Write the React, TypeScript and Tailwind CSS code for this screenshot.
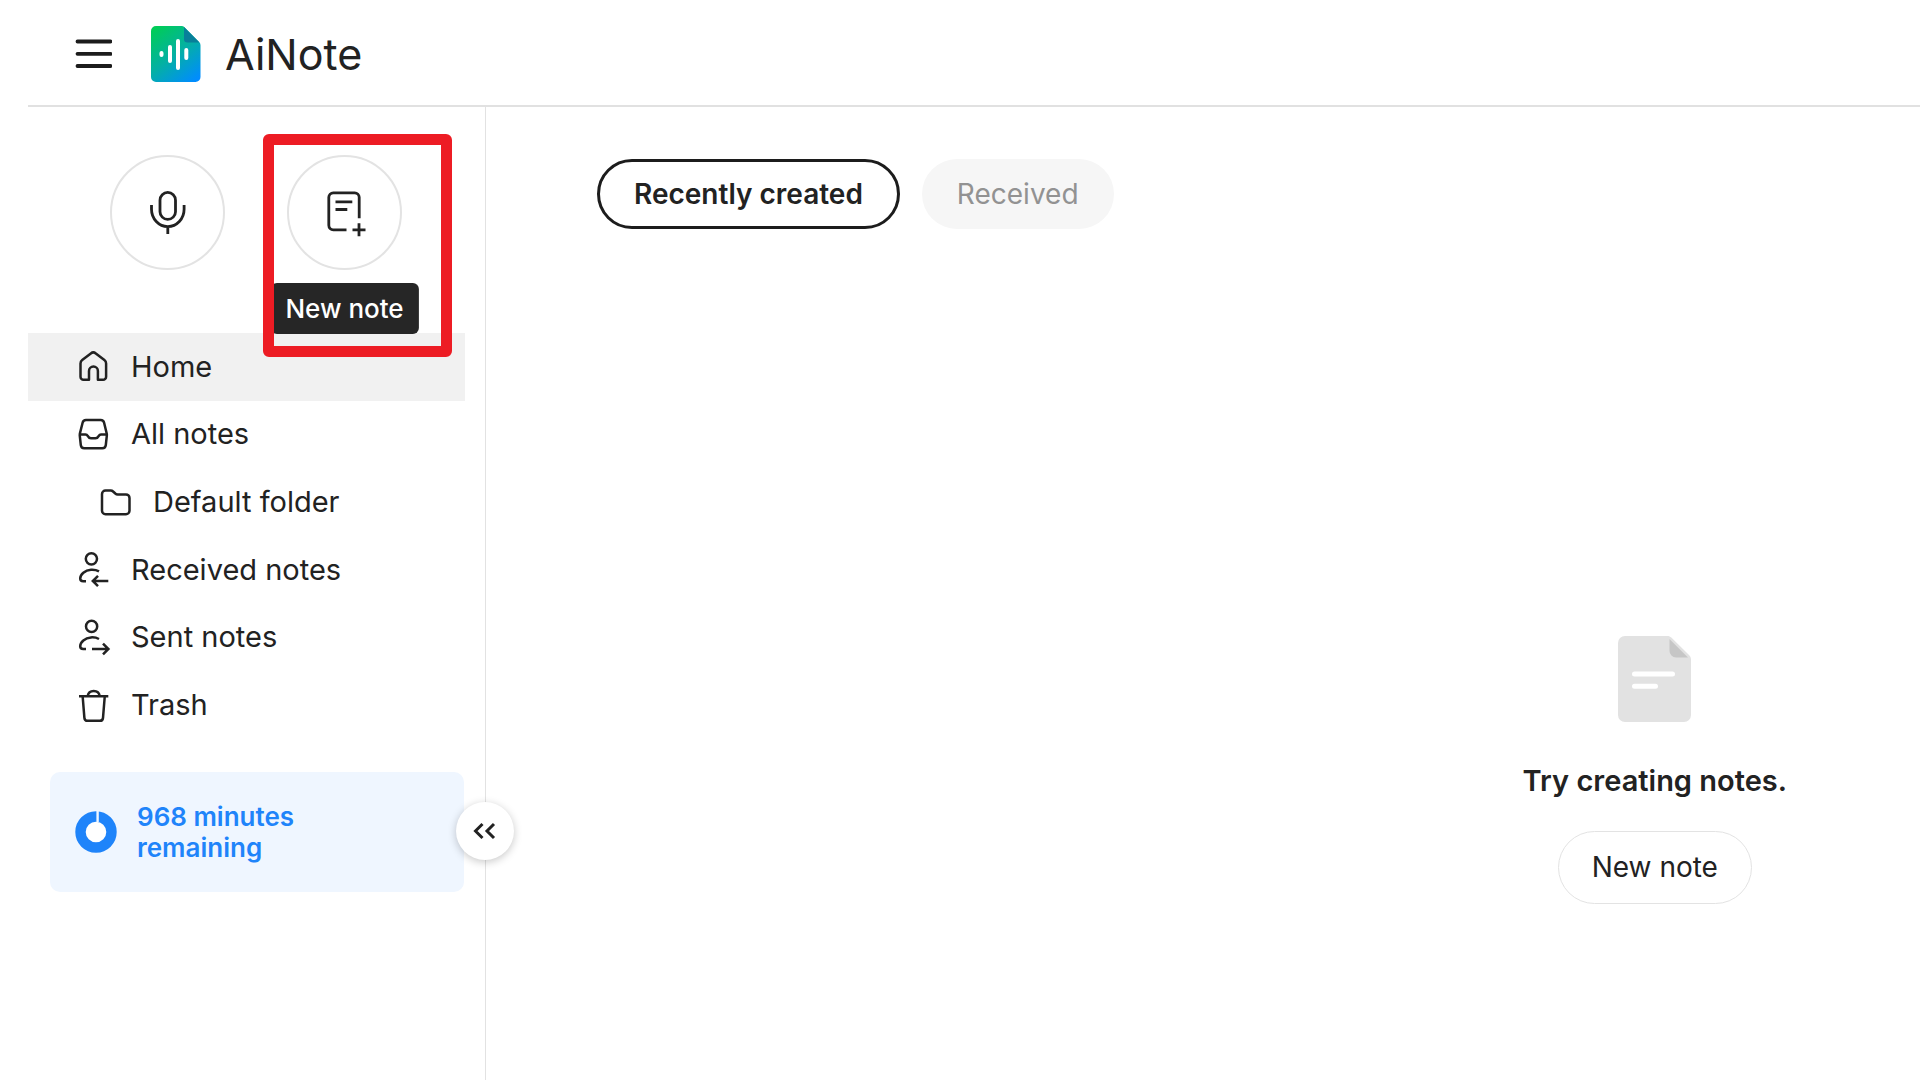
import React, { useState } from "react";

type IconProps = { children: React.ReactNode };

// Shared 32px outline icon used in the sidebar menu
const MenuIcon: React.FC<IconProps> = ({ children }) => (
  <svg
    viewBox="0 0 32 32"
    className="w-8 h-8 shrink-0 overflow-visible"
    fill="none"
    stroke="currentColor"
    strokeWidth="2.5"
    aria-hidden="true"
  >
    {children}
  </svg>
);

const HomeIcon = () => (
  <MenuIcon>
    <path
      strokeLinejoin="round"
      d="M11 28.7H5.5a3 3 0 0 1-3-3V12.500c0-1.500.5-2.600 1.700-3.500l8.600-6.600a4 4 0 0 1 5 0L26.400 9c1.200.9 1.700 2 1.700 3.500v13.200a3 3 0 0 1-3 3h-5.200V20a4.450 4.450 0 0 0-8.900 0z"
    />
  </MenuIcon>
);

const InboxIcon = () => (
  <MenuIcon>
    <path d="M8 2h14.7a3.5 3.5 0 0 1 3.4 2.7l2.6 10.8c.2.8.2 1.5.1 2.3l-1 9.3a3.5 3.5 0 0 1-3.5 3.1H6.3a3.5 3.5 0 0 1-3.5-3.1l-1-9.3c-.1-.8 0-1.5.1-2.3L4.6 4.7A3.5 3.5 0 0 1 8 2z" />
    <path d="M2 16.5h5.5c1 0 1.7.5 2.2 1.4.7 1.4 1.6 2.4 3.3 2.4h4.5c1.7 0 2.6-1 3.3-2.4.5-.9 1.2-1.4 2.2-1.4h6" />
  </MenuIcon>
);

const FolderIcon = () => (
  <MenuIcon>
    <path d="M5.5 4.5h5.2c1 0 1.7.3 2.4 1l2.2 2c.7.6 1.4.9 2.4.9h8.3a3.5 3.5 0 0 1 3.5 3.5v12.8a3.5 3.5 0 0 1-3.5 3.5H5.5a3.5 3.5 0 0 1-3.5-3.5V8a3.5 3.5 0 0 1 3.5-3.5z" />
  </MenuIcon>
);

const ReceivedIcon = () => (
  <MenuIcon>
    <circle cx="13.4" cy="4.8" r="5.6" />
    <path d="M21 17.3c-2.4-1.3-5-1.8-8-1.6C7 16.2 2.2 20.5 2.2 24.6c0 1.8 1.2 2.7 3 2.7H8" />
    <path d="M30.3 27H15M20 21.8L14.8 27l5.2 5.2" />
  </MenuIcon>
);

const SentIcon = () => (
  <MenuIcon>
    <circle cx="13.6" cy="5.4" r="5.6" />
    <path d="M21 18c-2.4-1.3-5-1.8-8-1.6C7 16.9 2.2 21.2 2.2 25.3c0 1.8 1.2 2.7 3 2.7H8" />
    <path d="M14 28h16M25 22.6l5.4 5.4-5.4 5.4" />
  </MenuIcon>
);

const TrashIcon = () => (
  <MenuIcon>
    <path d="M1 7.3h29.3M9.7 7c.5-3.2 2.4-5 6-5s5.5 1.8 6 5" />
    <path d="M4.7 8l1.7 20.8a3.2 3.2 0 0 0 3.2 3h12.2a3.2 3.2 0 0 0 3.2-3L26.7 8" />
  </MenuIcon>
);

const Logo = () => (
  <svg viewBox="0 0 50 56" className="w-[50px] h-14" aria-hidden="true">
    <defs>
      <linearGradient id="logo" x1="5" y1="2" x2="45" y2="54" gradientUnits="userSpaceOnUse">
        <stop offset="0" stopColor="#00cc58" />
        <stop offset="0.5" stopColor="#04b0a4" />
        <stop offset="1" stopColor="#008cff" />
      </linearGradient>
    </defs>
    <path
      fill="url(#logo)"
      d="M5 0h25.5c1.2 0 2.2.4 3 1.2l14.8 15c.8.8 1.2 1.8 1.2 3V51a5 5 0 0 1-5 5H5a5 5 0 0 1-5-5V5a5 5 0 0 1 5-5z"
    />
    <path fill="#087f9a" d="M33 1l15.500 15.500H36.500a3.500 3.500 0 0 1-3.500-3.500z" />
    <g stroke="#fff" strokeWidth="4" strokeLinecap="round">
      <path d="M10.5 27v2M19 21v14M27 15v27M35.3 24v8" />
    </g>
  </svg>
);

const menuItems = [
  { label: "Home", icon: <HomeIcon /> },
  { label: "All notes", icon: <InboxIcon /> },
  { label: "Default folder", icon: <FolderIcon />, nested: true },
  { label: "Received notes", icon: <ReceivedIcon /> },
  { label: "Sent notes", icon: <SentIcon /> },
  { label: "Trash", icon: <TrashIcon /> },
];

const Header: React.FC = () => (
  <header className="flex items-center h-[107px] pt-[3px] pl-[47px] border-b-2 border-[#e1e1e1]">
    <button type="button" aria-label="Menu">
      <svg viewBox="0 0 37 30" className="w-[37px] h-[30px]" stroke="#1c1c1c" strokeWidth="3.8" strokeLinecap="round">
        <path d="M2.500 2.500h33M2.500 14.800h33M2.500 27h33" />
      </svg>
    </button>
    <a href="#" className="flex items-center ml-[39px] gap-6">
      <Logo />
      <span className="text-[43px] leading-[56px]">AiNote</span>
    </a>
  </header>
);

const Sidebar: React.FC = () => {
  const [active, setActive] = useState("Home");

  return (
    <aside className="relative w-[458px] shrink-0 pt-12 border-r border-[#e2e2e2]">
      {/* Record and new note buttons */}
      <div className="flex gap-[62px] pl-[82px]">
        <button
          type="button"
          aria-label="Record"
          className="flex items-center justify-center w-[115px] h-[115px] rounded-full border-2 border-[#e3e3e3]"
        >
          <svg viewBox="0 0 44 44" className="w-11 h-11" fill="none" stroke="currentColor" strokeWidth="2.8">
            <rect x="14" y="1.4" width="15.5" height="27" rx="7.75" />
            <path d="M5.5 14v4.3a16.3 17.3 0 0 0 32.6 0V14M21.800 35.600v7.500" />
          </svg>
        </button>
        <div className="relative">
          <button
            type="button"
            aria-label="New note"
            className="flex items-center justify-center w-[115px] h-[115px] rounded-full border-2 border-[#e3e3e3]"
          >
            <svg viewBox="0 0 44 44" className="w-11 h-11 overflow-visible" fill="none" stroke="currentColor" strokeWidth="2.8">
              <path d="M23.5 38.8H10.3a4.5 4.5 0 0 1-4.5-4.5v-28a4.5 4.5 0 0 1 4.5-4.5h21.4a4.5 4.5 0 0 1 4.5 4.5v20.9" />
              <path d="M12.5 10.8h16.8M12.5 18.5H24.3M29.5 38.8h13M36 32.3v13" />
            </svg>
          </button>
          <div
            role="tooltip"
            className="absolute z-10 top-32 left-1/2 -translate-x-1/2 px-[15px] pt-px rounded-md bg-[#262626] text-white text-[26px] leading-[50px] font-medium whitespace-nowrap"
          >
            New note
          </div>
          {/* Highlight frame */}
          <div className="absolute z-20 -top-[21px] -left-6 w-[189px] h-[223px] rounded-md border-[11px] border-[#ed1c24] pointer-events-none">
            <div className="w-full h-full" />
          </div>
        </div>
      </div>

      <nav className="grid grid-rows-6 h-[406px] mt-[63px] mr-5">
        {menuItems.map((item) => (
          <a
            key={item.label}
            href="#"
            onClick={() => setActive(item.label)}
            className={`flex items-center gap-[21px] text-[29px] leading-9 ${item.nested ? "pl-[72px]" : "pl-[50px]"} ${
              active === item.label ? "bg-[#f1f1f1]" : ""
            }`}
          >
            {item.icon}
            <span>{item.label}</span>
          </a>
        ))}
      </nav>

      {/* Remaining minutes */}
      <div className="flex items-center gap-5 h-[120px] mt-[33px] ml-[22px] mr-[21px] pl-[25px] rounded-[10px] bg-[#eff6ff]">
        <svg viewBox="0 0 42 42" className="w-[42px] h-[42px]" aria-hidden="true">
          <circle cx="21" cy="21" r="15.5" fill="#fff" stroke="#1f84fa" strokeWidth="10.4" />
          <path d="M22.6 0v11" stroke="#eff6ff" strokeWidth="2.4" />
        </svg>
        <p className="text-[26px] leading-[31px] font-semibold text-[#1f84fa]">
          968 minutes
          <br />
          remaining
        </p>
      </div>

      <button
        type="button"
        aria-label="Collapse sidebar"
        className="absolute top-[695px] -right-[29px] flex items-center justify-center w-[58px] h-[58px] rounded-full bg-white shadow-[0_2px_8px_rgba(0,0,0,0.22)]"
      >
        <svg viewBox="0 0 24 18" className="w-6 h-[18px]" fill="none" stroke="currentColor" strokeWidth="3">
          <path d="M9.500 2L2.500 9l7 7M21 2l-7 7 7 7" />
        </svg>
      </button>
    </aside>
  );
};

const Main: React.FC = () => (
  <main className="flex-1 flex flex-col pt-[52px]">
    <div className="flex gap-[22px] pl-[111px]">
      <button
        type="button"
        className="px-[34px] border-3 border-[#1c1c1c] rounded-full text-[28px] leading-[64px] font-semibold"
      >
        Recently created
      </button>
      <button type="button" className="px-[35px] rounded-full bg-[#f6f6f6] text-[28px] leading-[70px] text-[#929292]">
        Received
      </button>
    </div>

    <section className="flex flex-col items-center self-end mt-[407px] mr-[133px]">
      <svg viewBox="0 0 73 86" className="w-[73px] h-[86px]" aria-hidden="true">
        <path
          fill="#e2e2e2"
          d="M7 0h42.5c1.5 0 2.8.6 3.8 1.6L71 19c1.2 1.2 2 2.7 2 4.5V79a7 7 0 0 1-7 7H7a7 7 0 0 1-7-7V7a7 7 0 0 1 7-7z"
        />
        <path fill="#c6c6c6" d="M51.500 3l18.500 18.500H58a6.500 6.500 0 0 1-6.500-6.500z" />
        <path d="M16.500 38h38M16.500 50.300h21" stroke="#fff" strokeWidth="5" strokeLinecap="round" />
      </svg>
      <h2 className="mt-[41px] text-[29px] leading-9 font-semibold">Try creating notes.</h2>
      <button type="button" className="mt-8 px-[33px] border border-[#e3e3e3] rounded-full text-[28px] leading-[71px]">
        New note
      </button>
    </section>
  </main>
);

const App: React.FC = () => {
  return (
    <div className="flex flex-col min-h-screen pl-7 bg-white text-[#222222] font-[Inter,sans-serif]">
      <Header />
      <div className="flex flex-1">
        <Sidebar />
        <Main />
      </div>
    </div>
  );
};

export default App;
